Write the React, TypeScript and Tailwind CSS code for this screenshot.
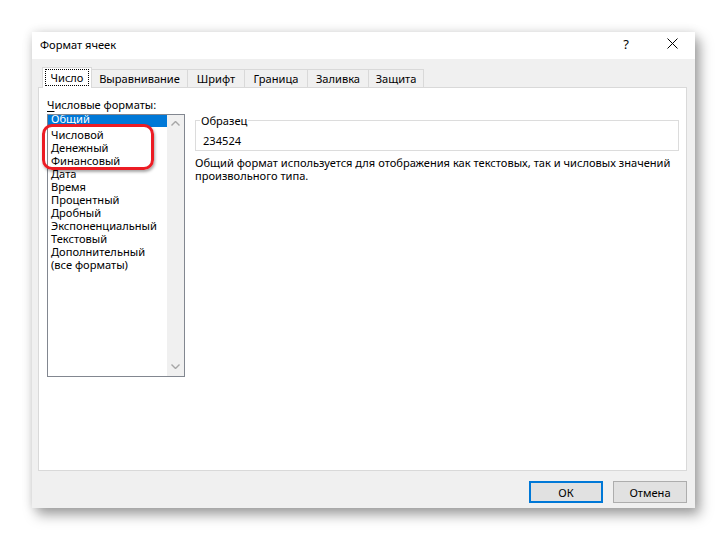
import React from "react";

const items = [
  "Числовой",
  "Денежный",
  "Финансовый",
  "Дата",
  "Время",
  "Процентный",
  "Дробный",
  "Экспоненциальный",
  "Текстовый",
  "Дополнительный",
  "(все форматы)",
];

const tabs = [
  { label: "Выравнивание", w: "w-[97px]" },
  { label: "Шрифт", w: "w-[58px]" },
  { label: "Граница", w: "w-[64px]" },
  { label: "Заливка", w: "w-[62px]" },
  { label: "Защита", w: "w-[56px]" },
];

export default function App() {
  return (
    <div
      className="w-[727px] h-[540px] bg-white pt-[32px] pl-[32px] text-[11.1px] text-black"
      style={{ fontFamily: '"Noto Sans", "Liberation Sans", sans-serif' }}
    >
      <div className="w-[663px] h-[476px] flex flex-col bg-[#f0f0f0] shadow-[0_0_10px_rgba(0,0,0,0.12),5px_7px_12px_rgba(0,0,0,0.35)]">
        {/* Title bar */}
        <div className="h-[27px] bg-white flex items-center shrink-0">
          <div className="pl-[8px] leading-[13px] pb-[3px]">Формат ячеек</div>
          <div className="ml-auto flex h-full">
            <div className="w-[46px] h-full flex items-center justify-center text-[13px] leading-none pb-[3px]">
              ?
            </div>
            <div className="w-[46px] h-full flex items-center justify-center pb-[4px]">
              <svg width="11" height="11" viewBox="0 0 11 11">
                <path d="M0.5 0.5 L10.5 10.5 M10.5 0.5 L0.5 10.5" stroke="#000" strokeWidth="1" fill="none" />
              </svg>
            </div>
          </div>
        </div>

        {/* Body */}
        <div className="flex flex-col pl-[6px] pr-[8px] pt-[8px]">
          {/* Tabs */}
          <div className="flex items-end h-[20px] pl-[4px]">
            <div className="relative z-10 w-[50px] h-[21px] -mb-px bg-white border border-b-0 border-[#d9d9d9] flex items-start justify-center pt-[1px]">
              <div className="border border-dotted border-black px-[5px] leading-[15px]">Число</div>
            </div>
            {tabs.map((t) => (
              <div
                key={t.label}
                className={`${t.w} h-[18px] -ml-px border border-b-0 border-[#d9d9d9] bg-[#f0f0f0] flex items-center justify-center leading-[13px]`}
              >
                {t.label}
              </div>
            ))}
          </div>

          {/* Panel */}
          <div className="h-[384px] bg-white border border-[#d9d9d9] flex pl-[8px]">
            {/* Left column */}
            <div className="flex flex-col pt-[10px]">
              <div className="leading-[13px]">
                <span className="underline underline-offset-2">Ч</span>исловые форматы:
              </div>
              <div className="relative mt-[3px]">
                <div className="w-[138px] h-[263px] border border-[#828790] flex overflow-hidden">
                  <div className="flex-1 flex flex-col overflow-hidden">
                    <div className="-mt-[2px] h-[14px] mb-px shrink-0 bg-[#0078d7] text-white leading-[12px] pl-[3px] overflow-hidden">
                      Общий
                    </div>
                    {items.map((it) => (
                      <div key={it} className="h-[13px] shrink-0 leading-[13px] pl-[3px] whitespace-nowrap">
                        {it}
                      </div>
                    ))}
                  </div>
                  <div className="w-[17px] bg-[#f0f0f0] flex flex-col items-center justify-between pt-[6px] pb-[7px]">
                    <svg width="9" height="5" viewBox="0 0 9 5">
                      <path d="M0.5 4.5 L4.5 0.5 L8.5 4.5" stroke="#a6a6a6" strokeWidth="1.4" fill="none" />
                    </svg>
                    <svg width="9" height="5" viewBox="0 0 9 5">
                      <path d="M0.5 0.5 L4.5 4.5 L8.5 0.5" stroke="#a6a6a6" strokeWidth="1.4" fill="none" />
                    </svg>
                  </div>
                </div>
                {/* Red highlight */}
                <div className="absolute left-[-5px] top-[10px] w-[112px] h-[46px] rounded-[10px] border-[3px] border-[#ec1c24] shadow-[1px_2px_3px_rgba(0,0,0,0.35)]" />
              </div>
            </div>

            {/* Right column */}
            <div className="ml-[10px] w-[484px] flex flex-col pt-[32px]">
              <div className="relative h-[31px] border border-[#dcdcdc] pl-[7px] pt-[13px] leading-[13px]">
                <div className="absolute -top-[7px] left-[4px] bg-white px-[1px] leading-[13px]">Образец</div>
                234524
              </div>
              <div className="mt-[5px] leading-[13px] whitespace-nowrap">
                Общий формат используется для отображения как текстовых, так и числовых значений
                <br />
                произвольного типа.
              </div>
            </div>
          </div>

          {/* Buttons */}
          <div className="flex justify-end gap-[10px] mt-[10px]">
            <div className="w-[74px] h-[22px] bg-[#e1e1e1] border-2 border-[#0078d7] flex items-center justify-center leading-[13px]">
              ОК
            </div>
            <div className="w-[74px] h-[22px] bg-[#e1e1e1] border border-[#adadad] flex items-center justify-center leading-[13px]">
              Отмена
            </div>
          </div>
        </div>
      </div>
    </div>
  );
}
